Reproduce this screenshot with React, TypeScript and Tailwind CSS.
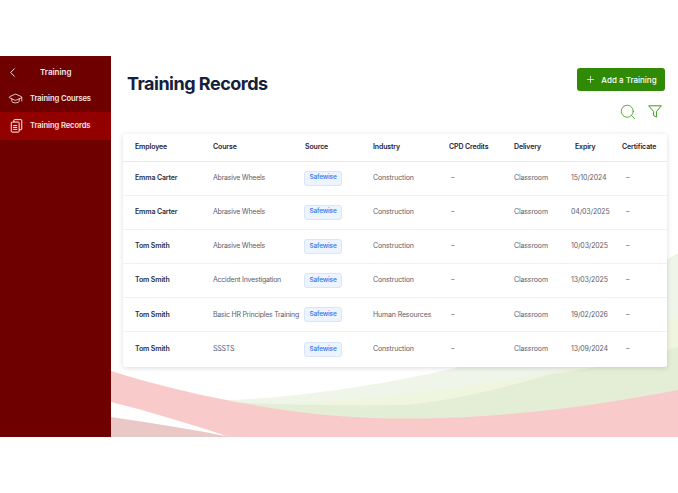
import { ChevronLeft, GraduationCap, Plus, Search } from "lucide-react";

const rows = [
  { employee: "Emma Carter", course: "Abrasive Wheels", industry: "Construction", expiry: "15/10/2024" },
  { employee: "Emma Carter", course: "Abrasive Wheels", industry: "Construction", expiry: "04/03/2025" },
  { employee: "Tom Smith", course: "Abrasive Wheels", industry: "Construction", expiry: "10/03/2025" },
  { employee: "Tom Smith", course: "Accident Investigation", industry: "Construction", expiry: "13/03/2025" },
  { employee: "Tom Smith", course: "Basic HR Principles Training", industry: "Human Resources", expiry: "19/02/2026" },
  { employee: "Tom Smith", course: "SSSTS", industry: "Construction", expiry: "13/09/2024" },
];

const headers = ["Employee", "Course", "Source", "Industry", "CPD Credits", "Delivery", "Expiry", "Certificate"];
const cols = "grid grid-cols-[78px_92px_68px_76px_65px_61px_47px_1fr] items-center pl-3 tracking-[-0.14px]";

function RecordsIcon() {
  return (
    <svg viewBox="0 0 14 16" className="h-[14px] w-[13px]" fill="none" stroke="currentColor" strokeWidth="1.1">
      <rect x="1" y="3.5" width="9" height="11.5" rx="1" />
      <path d="M4 3.5V1.5a.8.8 0 0 1 .8-.8h7.4a.8.8 0 0 1 .8.8v10a.8.8 0 0 1-.8.8H10" />
      <path d="M3.2 7.5h4.6M3.2 9.7h4.6M3.2 11.9h4.6" />
    </svg>
  );
}

function FunnelIcon() {
  return (
    <svg viewBox="0 0 14 13" className="mt-[2px] h-[13px] w-[14px]" fill="none" stroke="currentColor" strokeWidth="1" strokeLinejoin="round">
      <path d="M.7 .8h12.6L8.4 6.6v5.6L5.6 10.4V6.6Z" />
    </svg>
  );
}

function Waves() {
  return (
    <svg className="absolute inset-0 h-full w-full" viewBox="0 0 567 381" preserveAspectRatio="none">
      <path d="M112 344C160 344 260 332 344 312C420 290 500 236 567 197V381H112Z" fill="#eff5e9" />
      <path d="M200 346C300 340 400 325 467 311C510 295 540 278 567 261V381H200Z" fill="#f0f5df" />
      <path d="M112 346C180 349 240 350 294 349C340 345 390 333 440 318C490 312 530 302 567 291V381H112Z" fill="#e4edd5" />
      <path d="M0 315C60 334 150 354 227 360C330 368 450 357 567 334V381H119C80 368 40 356 0 346Z" fill="#f9caca" />
      <path d="M0 361C40 367 80 373 119 381H0Z" fill="#eac8c8" />
    </svg>
  );
}

export default function App() {
  return (
    <div className="h-[493px] w-[678px] overflow-hidden bg-white py-[56px] font-['Inter','Liberation_Sans',sans-serif]">
      <div className="flex h-[381px]">
        <aside className="flex w-[111px] shrink-0 flex-col bg-[#6e0000] text-white">
          <div className="flex h-[31px] items-center pl-[5px] pt-[1px]">
            <ChevronLeft className="h-[15px] w-[15px]" strokeWidth={1.4} />
            <span className="ml-[20px] text-[8px] font-semibold text-[#f6e6e6]">Training</span>
          </div>
          <div className="flex h-[23px] items-center gap-[7px] pl-[8px]">
            <GraduationCap className="h-[15px] w-[15px]" strokeWidth={1.2} />
            <span className="text-[7.6px] font-semibold tracking-[-0.1px] text-[#f6e6e6]">Training Courses</span>
          </div>
          <div className="mt-[2px] flex h-[28px] items-center gap-[7px] bg-[#930000] pl-[10px]">
            <RecordsIcon />
            <span className="text-[7.6px] font-semibold tracking-[-0.1px] text-[#f6e6e6]">Training Records</span>
          </div>
        </aside>
        <main className="relative min-w-0 flex-1">
          <Waves />
          <div className="relative flex flex-col pl-[12px] pr-[11px]">
            <div className="flex items-start justify-between pl-[4px] pr-[2px] pt-[12px]">
              <h1 className="mt-[3px] text-[18px] leading-[26px] font-bold tracking-[-0.5px] text-[#14213d]">Training Records</h1>
              <button className="flex h-[23px] w-[88px] items-center justify-center gap-[5px] rounded-[3px] bg-[#2f8a05] text-[8px] font-medium text-white">
                <Plus className="h-[11px] w-[11px]" strokeWidth={1.5} />
                Add a Training
              </button>
            </div>
            <div className="mt-[6px] flex items-start justify-end gap-[11px] pr-[5px] text-[#3a9c1a]">
              <Search className="h-[18px] w-[18px]" strokeWidth={1.1} />
              <FunnelIcon />
            </div>
            <div className="mt-[13px] rounded-[3px] bg-white shadow-[0_1px_5px_rgba(30,40,70,0.16)]">
              <div className={`${cols} h-[27.5px] border-b border-[#e6e9f0] text-[7px] font-semibold text-[#1e2439]`}>
                {headers.map((h) => (
                  <span key={h}>{h}</span>
                ))}
              </div>
              {rows.map((r, i) => (
                <div key={i} className={`${cols} h-[34.2px] border-b border-[#f1f2f5] text-[7px] text-[#5a5e6e] last:border-b-0`}>
                  <span className="font-semibold text-[#2a2f42]">{r.employee}</span>
                  <span className="whitespace-nowrap tracking-[-0.24px]">{r.course}</span>
                  <span className="-ml-[1px] flex h-[15px] w-[38px] items-center justify-center rounded-[3px] border border-[#d8e5fb] bg-[#eef4fe] text-[6.5px] font-medium text-[#2f6fed]">
                    Safewise
                  </span>
                  <span>{r.industry}</span>
                  <span className="pl-[2px]">–</span>
                  <span>Classroom</span>
                  <span className="-ml-[4px]">{r.expiry}</span>
                  <span className="pl-[4px]">–</span>
                </div>
              ))}
            </div>
          </div>
        </main>
      </div>
    </div>
  );
}
